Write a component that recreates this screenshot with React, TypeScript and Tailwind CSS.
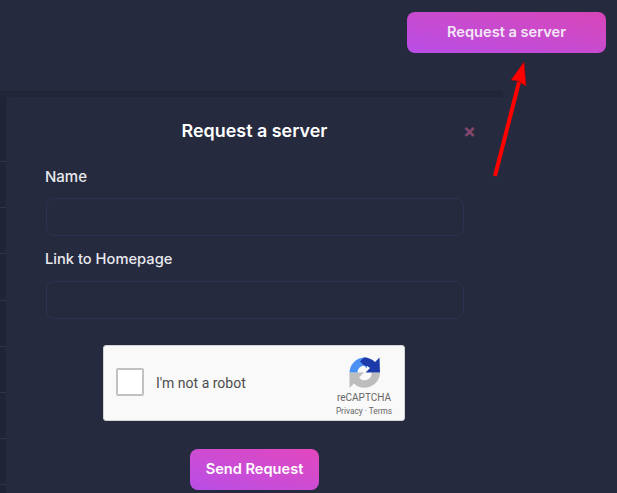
const rowLines = [64, 110, 156, 203, 249, 295, 341, 387];

const RecaptchaLogo = () => (
  <svg width="31" height="31" viewBox="0 0 31 31" className="block">
    <path d="M0.5 15.5 L0.5 31 L5 26.5 A15.5 15.5 0 0 0 31 15.5 L22.5 15.5 A7 7 0 0 1 10 20.5 L15 15.5 Z" fill="#bdbdbd" />
    <path d="M15 0.5 A15.5 15.5 0 0 0 0.5 15.5 L8.5 15.5 A7 7 0 0 1 15 8.5 L18 11.5 L18 0.8 Z" fill="#4a90f5" />
    <path d="M15 0.5 A15.5 15.5 0 0 1 26 5 L30.5 0.5 L31 15.5 L16.5 15.5 L21 11 A7 7 0 0 0 15 8.5 L11 4.5 Z" fill="#1c3aa9" />
  </svg>
);

export default function App() {
  return (
    <div className="relative h-[493px] w-[617px] overflow-hidden bg-[#262a3e] font-['Inter',sans-serif] text-white">
      <header className="flex justify-end pt-3 pr-[11px]">
        <button className="h-[41px] w-[199px] rounded-lg bg-gradient-to-tr from-[#b84de6] to-[#d845b8] text-[14.6px] font-semibold text-[#f3e6f6]">
          Request a server
        </button>
      </header>

      <div className="mt-[38px] flex h-[402px] w-[503px] items-stretch border-t-[6px] border-[#222537]">
        <div className="relative w-[6px] bg-[#212436]">
          {rowLines.map((y) => (
            <div key={y} className="absolute left-0 h-px w-full bg-[#2f3347]" style={{ top: y }} />
          ))}
        </div>

        <section className="w-[497px] rounded-tl-md bg-[#262a3e] px-10">
          <div className="relative pt-[21px] text-center">
            <h2 className="text-[17.9px] leading-[26px] font-semibold text-white">Request a server</h2>
            <span className="absolute top-[24px] right-[-13px] text-[19px] leading-[22px] font-bold text-[#84476e]">×</span>
          </div>

          <label className="mt-[23px] -ml-px block text-[15px] leading-[20px] font-medium text-[#e8e9ee]">Name</label>
          <div className="mt-[11px] h-[38px] w-[418px] rounded-lg border border-[#2b3252]" />

          <label className="mt-[13px] -ml-px block text-[14.7px] leading-[20px] font-medium text-[#e8e9ee]">Link to Homepage</label>
          <div className="mt-[12px] h-[38px] w-[418px] rounded-lg border border-[#2b3252]" />

          <div className="mt-[26px] ml-[57px] flex h-[76px] w-[302px] items-center rounded-[3px] border border-[#d3d3d3] bg-[#f9f9f9] font-['Roboto',sans-serif]">
            <div className="mb-[2px] ml-3 h-7 w-7 rounded-[2px] border-2 border-[#c1c1c1] bg-white" />
            <span className="ml-3 text-[14px] text-[#4c4c4c]">I'm not a robot</span>
            <div className="mr-[11px] ml-auto flex w-[58px] flex-col items-center pt-[7px]">
              <RecaptchaLogo />
              <span className="mt-[4px] text-[10px] leading-[12px] text-[#666]">reCAPTCHA</span>
              <span className="mt-[2px] text-[8.3px] leading-[10px] whitespace-nowrap text-[#666]">Privacy · Terms</span>
            </div>
          </div>

          <div className="mt-[28px] flex justify-center">
            <button className="h-[41px] w-[129px] rounded-lg bg-gradient-to-tr from-[#b84de6] to-[#e346be] text-[14.6px] font-semibold text-white">
              Send Request
            </button>
          </div>
        </section>
      </div>

      {/* annotation arrow */}
      <svg className="absolute top-[60px] left-[490px]" width="42" height="120" viewBox="0 0 42 120">
        <path d="M5 116 L29 22" stroke="#f00" strokeWidth="4" fill="none" />
        <path d="M34 2 L21 20 L28 21 L36 26 Z" fill="#f00" stroke="#a00" strokeWidth="0.5" />
      </svg>
    </div>
  );
}
